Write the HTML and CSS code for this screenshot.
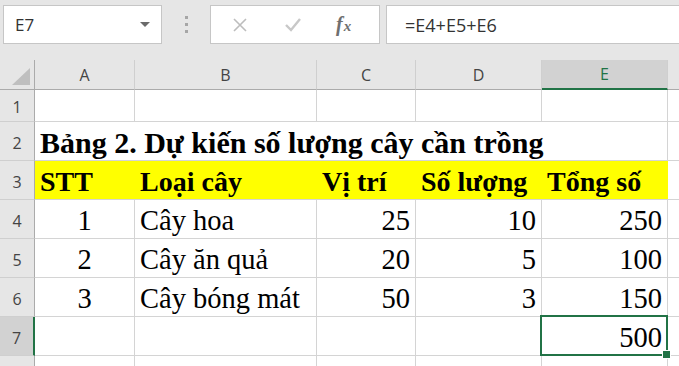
FILE: index.html
```html
<!DOCTYPE html>
<html>
<head>
<meta charset="utf-8">
<title>Bảng 2</title>
<link rel="stylesheet" href="styles.css">
</head>
<body>
<div class="toolbar">
    <div class="namebox">
        <span>E7</span>
        <span class="caret"></span>
    </div>
    <div class="dots"><i></i><i></i><i></i></div>
    <div class="buttons">
        <svg class="btn" width="16" height="16" viewBox="0 0 16 16"><path d="M2 2 L14 14 M14 2 L2 14" stroke="#bdbdbd" stroke-width="1.6" fill="none"/></svg>
        <svg class="btn" width="18" height="16" viewBox="0 0 18 16"><path d="M2 8 L7 13 L16 2" stroke="#c8c8c8" stroke-width="2.4" fill="none"/></svg>
        <span class="fx"><i>f</i><em>x</em></span>
    </div>
    <div class="formula">=E4+E5+E6</div>
</div>

<div class="sheet">
    <!-- column headers -->
    <div class="corner"><svg width="35" height="30" viewBox="0 0 35 30"><polygon points="30,8 30,25 12,25" fill="#bfbfbf"/></svg></div>
    <div class="colhead">A</div>
    <div class="colhead">B</div>
    <div class="colhead">C</div>
    <div class="colhead">D</div>
    <div class="colhead sel">E</div>
    <div class="colhead"></div>

    <!-- 1 -->
    <div class="rowhead r1">1</div>
    <div class="cell r1"></div><div class="cell r1"></div><div class="cell r1"></div><div class="cell r1"></div><div class="cell r1"></div><div class="cell r1"></div>

    <!-- 2 -->
    <div class="rowhead">2</div>
    <div class="cell title">Bảng 2. Dự kiến số lượng cây cần trồng</div>
    <div class="cell"></div>

    <!-- 3 -->
    <div class="rowhead">3</div>
    <div class="cell head">STT</div>
    <div class="cell head">Loại cây</div>
    <div class="cell head">Vị trí</div>
    <div class="cell head">Số lượng</div>
    <div class="cell head">Tổng số</div>
    <div class="cell"></div>

    <!-- 4 -->
    <div class="rowhead">4</div>
    <div class="cell mid">1</div>
    <div class="cell">Cây hoa</div>
    <div class="cell num">25</div>
    <div class="cell num">10</div>
    <div class="cell num">250</div>
    <div class="cell"></div>

    <!-- 5 -->
    <div class="rowhead">5</div>
    <div class="cell mid">2</div>
    <div class="cell">Cây ăn quả</div>
    <div class="cell num">20</div>
    <div class="cell num">5</div>
    <div class="cell num">100</div>
    <div class="cell"></div>

    <!-- 6 -->
    <div class="rowhead">6</div>
    <div class="cell mid">3</div>
    <div class="cell">Cây bóng mát</div>
    <div class="cell num">50</div>
    <div class="cell num">3</div>
    <div class="cell num">150</div>
    <div class="cell"></div>

    <!-- 7 -->
    <div class="rowhead sel">7</div>
    <div class="cell"></div>
    <div class="cell"></div>
    <div class="cell"></div>
    <div class="cell"></div>
    <div class="cell num active">500</div>
    <div class="cell"></div>

    <!-- 8 (chỉ thấy mép trên) -->
    <div class="rowhead"></div>
    <div class="cell"></div><div class="cell"></div><div class="cell"></div><div class="cell"></div><div class="cell"></div><div class="cell"></div>
</div>
</body>
</html>
```

FILE: styles.css
```css
*{
box-sizing:border-box;
}
body{
margin:0;
background:#e6e6e6;
overflow:hidden;
font-family:"Open Sans","Noto Sans",sans-serif;
}

/* thanh công thức */
.toolbar{
display:flex;
align-items:center;
height:60px;
padding:5px 0 16px 3px;
}
.namebox{
width:159px;
height:39px;
background:#fff;
border:1px solid #c6c6c6;
display:flex;
align-items:center;
justify-content:space-between;
padding:0 11px 0 11px;
font-size:17px;
color:#333;
}
.caret{
border-left:5px solid transparent;
border-right:5px solid transparent;
border-top:5px solid #6b6b6b;
}
.dots{
width:48px;
display:flex;
flex-direction:column;
align-items:center;
gap:4px;
}
.dots i{
width:3px;
height:3px;
background:#a6a6a6;
}
.buttons{
width:170px;
height:39px;
background:#fff;
border:1px solid #c6c6c6;
display:flex;
align-items:center;
padding-left:21px;
}
.btn{
margin-right:36px;
}
.fx{
font-family:"Liberation Serif",serif;
color:#6f6f6f;
font-size:20px;
font-weight:bold;
margin-left:-2px;
}
.fx em{
font-size:15px;
font-style:italic;
margin-left:1px;
}
.formula{
flex:1;
height:39px;
margin-left:6px;
margin-right:-2px;
background:#fff;
border:1px solid #c6c6c6;
display:flex;
align-items:center;
padding-left:18px;
font-size:18px;
color:#333;
}

/* bảng tính */
.sheet{
display:grid;
grid-template-columns:35px 100px 182px 99px 126px 126px 40px;
grid-template-rows:30px 32px repeat(7,39px);
background:#fff;
}
.corner{
background:#e6e6e6;
border-right:1px solid #ababab;
border-bottom:1px solid #ababab;
}
.corner svg{
display:block;
}
.colhead{
background:#e6e6e6;
border-right:1px solid #cfcfcf;
border-bottom:1px solid #ababab;
display:flex;
align-items:center;
justify-content:center;
font-size:16px;
color:#444;
}
.colhead.sel{
background:#d2d2d2;
border-bottom:2px solid #217346;
color:#217346;
}
.rowhead{
background:#e6e6e6;
border-right:1px solid #ababab;
border-bottom:1px solid #cfcfcf;
display:flex;
align-items:center;
justify-content:center;
padding-top:3px;
font-size:16px;
color:#444;
}
.rowhead.sel{
background:#d2d2d2;
border-right:2px solid #217346;
}
.cell{
border-right:1px solid #d4d4d4;
border-bottom:1px solid #d4d4d4;
display:flex;
align-items:flex-end;
padding:0 5px 1px 5px;
font-family:"Liberation Serif",serif;
font-size:28.5px;
line-height:32px;
color:#000;
white-space:nowrap;
}
.cell.title{
grid-column:span 5;
font-weight:bold;
font-size:30px;
}
.cell.head{
background:#ffff00;
border-right:none;
font-weight:bold;
font-size:28px;
}
.cell.mid{
justify-content:center;
}
.cell.num{
justify-content:flex-end;
}
.cell.active{
position:relative;
}
.cell.active::after{
content:"";
position:absolute;
left:-2px;
top:-2px;
right:-1px;
bottom:-1px;
border:2px solid #217346;
}
.cell.active::before{
content:"";
position:absolute;
right:-4px;
bottom:-4px;
width:7px;
height:7px;
background:#217346;
border:1px solid #fff;
z-index:1;
}
```
